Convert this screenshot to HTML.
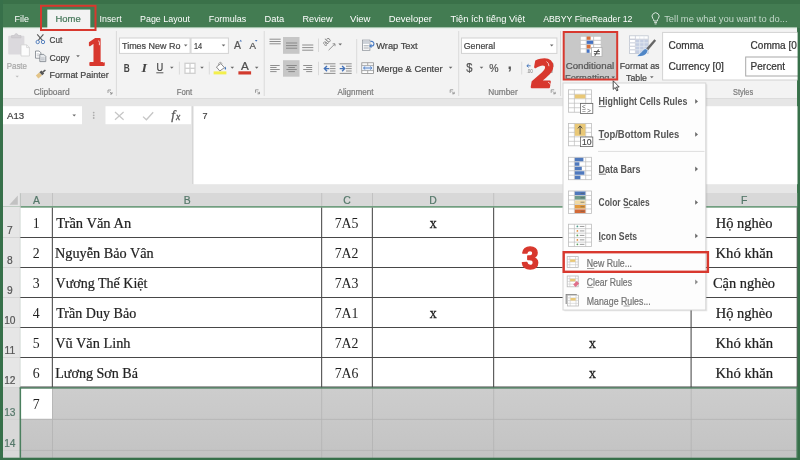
<!DOCTYPE html>
<html lang="vi"><head><meta charset="utf-8"><title>Excel - Conditional Formatting - New Rule</title>
<style>
html,body{margin:0;padding:0;background:#3d744c;}
body{width:800px;height:460px;overflow:hidden;font-family:"Liberation Sans",sans-serif;}
svg{display:block;position:absolute;left:0;top:0;filter:blur(0.4px)}
text{white-space:pre}
</style></head><body>
<svg width="800" height="460" viewBox="0 0 800 460">
<rect x="0" y="0" width="800" height="460" fill="#437c52" />
<rect x="0" y="0" width="800" height="4" fill="#3a7149" />
<rect x="3" y="27.7" width="794" height="70.8" fill="#f3f3f3" />
<rect x="3" y="27.6" width="794" height="1.5" fill="#e4efe7" />
<rect x="3" y="98.5" width="794" height="95" fill="#e6e6e6" />
<line x1="3" y1="98.5" x2="797" y2="98.5" stroke="#dcdcdc" stroke-width="1" />
<rect x="47.3" y="9.6" width="43" height="19.5" fill="#f3f3f3" />
<text x="14.5" y="22.05" font-family="Liberation Sans, sans-serif" font-size="9.9" fill="#fff" textLength="14.5" lengthAdjust="spacingAndGlyphs" >File</text>
<text x="55.5" y="22.05" font-family="Liberation Sans, sans-serif" font-size="9.9" fill="#47785a" textLength="25.2" lengthAdjust="spacingAndGlyphs" stroke="#47785a" stroke-width="0.22" >Home</text>
<text x="99.5" y="22.05" font-family="Liberation Sans, sans-serif" font-size="9.9" fill="#fff" textLength="22.2" lengthAdjust="spacingAndGlyphs" >Insert</text>
<text x="140" y="22.05" font-family="Liberation Sans, sans-serif" font-size="9.9" fill="#fff" textLength="50" lengthAdjust="spacingAndGlyphs" >Page Layout</text>
<text x="208.7" y="22.05" font-family="Liberation Sans, sans-serif" font-size="9.9" fill="#fff" textLength="37.5" lengthAdjust="spacingAndGlyphs" >Formulas</text>
<text x="264.5" y="22.05" font-family="Liberation Sans, sans-serif" font-size="9.9" fill="#fff" textLength="19.7" lengthAdjust="spacingAndGlyphs" >Data</text>
<text x="302.5" y="22.05" font-family="Liberation Sans, sans-serif" font-size="9.9" fill="#fff" textLength="30" lengthAdjust="spacingAndGlyphs" >Review</text>
<text x="350" y="22.05" font-family="Liberation Sans, sans-serif" font-size="9.9" fill="#fff" textLength="20.5" lengthAdjust="spacingAndGlyphs" >View</text>
<text x="388.7" y="22.05" font-family="Liberation Sans, sans-serif" font-size="9.9" fill="#fff" textLength="43.3" lengthAdjust="spacingAndGlyphs" >Developer</text>
<text x="450.5" y="22.05" font-family="Liberation Sans, sans-serif" font-size="9.9" fill="#fff" textLength="74.5" lengthAdjust="spacingAndGlyphs" >Tiện ích tiếng Việt</text>
<text x="543.2" y="22.05" font-family="Liberation Sans, sans-serif" font-size="9.9" fill="#fff" textLength="89.3" lengthAdjust="spacingAndGlyphs" >ABBYY FineReader 12</text>
<path d="M652.8 18.4a3.5 3.5 0 1 1 5.6 0c-.7.8-1.1 1.5-1.1 2.6h-3.4c0-1.1-.4-1.8-1.1-2.6z" fill="none" stroke="#dcE8e0" stroke-width="1" />
<line x1="654.2" y1="22.4" x2="657" y2="22.4" stroke="#dce8e0" stroke-width="1" />
<line x1="654.6" y1="23.9" x2="656.6" y2="23.9" stroke="#dce8e0" stroke-width="0.9" />
<text x="664.2" y="21.65" font-family="Liberation Sans, sans-serif" font-size="9.9" fill="#c3d8ca" textLength="123.3" lengthAdjust="spacingAndGlyphs" >Tell me what you want to do...</text>
<rect x="41" y="5.8" width="54.5" height="24.2" fill="none" stroke="#d8382e" stroke-width="2" />
<rect x="8.2" y="35.8" width="16.2" height="18.6" fill="#dbd9dd" rx="1" />
<path d="M11.6 37.8v-2.2h3c0-2.6 3.4-2.6 3.4 0h3v2.2z" fill="#d2d0d4" stroke="#c4c2c6" stroke-width="0.7" />
<path d="M21 44.8h5.6l2.8 2.8v8.4h-8.4z" fill="#fcfcfc" stroke="#cfcfcf" stroke-width="0.8" />
<path d="M26.6 44.8v2.8h2.8" fill="none" stroke="#cfcfcf" stroke-width="0.7" />
<text x="6.7" y="69.1" font-family="Liberation Sans, sans-serif" font-size="9.7" fill="#a8a8a8" textLength="20.3" lengthAdjust="spacingAndGlyphs" stroke="#a8a8a8" stroke-width="0.22" >Paste</text>
<path d="M15.5 75.8h3.4l-1.7 1.8z" fill="#bdbdbd" />
<line x1="37.2" y1="34.4" x2="42.6" y2="40.6" stroke="#5a5a5a" stroke-width="1.1" />
<line x1="43.4" y1="34.4" x2="38" y2="40.6" stroke="#5a5a5a" stroke-width="1.1" />
<circle cx="37.7" cy="42" r="1.7" fill="none" stroke="#5a84c0" stroke-width="1"/>
<circle cx="43" cy="42" r="1.7" fill="none" stroke="#5a84c0" stroke-width="1"/>
<text x="49.5" y="42.5" font-family="Liberation Sans, sans-serif" font-size="9.7" fill="#444444" textLength="12.7" lengthAdjust="spacingAndGlyphs" stroke="#444444" stroke-width="0.22" >Cut</text>
<path d="M35.5 51h3.6l1.8 1.8v5.4h-5.4z" fill="#fff" stroke="#7a8088" stroke-width="0.8" />
<line x1="36.6" y1="54" x2="39.4" y2="54" stroke="#9aa0a8" stroke-width="0.6" />
<line x1="36.6" y1="55.8" x2="39.4" y2="55.8" stroke="#9aa0a8" stroke-width="0.6" />
<path d="M39.8 54.4h4l2 2v5.2h-6z" fill="#e6e9ec" stroke="#7a8088" stroke-width="0.8" />
<line x1="41" y1="58" x2="44.6" y2="58" stroke="#9aa0a8" stroke-width="0.6" />
<line x1="41" y1="59.8" x2="44.6" y2="59.8" stroke="#9aa0a8" stroke-width="0.6" />
<text x="49.5" y="60.7" font-family="Liberation Sans, sans-serif" font-size="9.7" fill="#444444" textLength="20.2" lengthAdjust="spacingAndGlyphs" stroke="#444444" stroke-width="0.22" >Copy</text>
<path d="M76.2 55.2h3.6l-1.8 2z" fill="#6a6a6a" />
<path d="M35.8 75.4l3.4-3 2.8 3-3.6 3z" fill="#e3c488" />
<path d="M39.4 72.2l2-1.8 2.8 3-2 1.8z" fill="#555" />
<line x1="42.8" y1="72.2" x2="45.4" y2="70" stroke="#555" stroke-width="1.6" />
<text x="49.5" y="77.5" font-family="Liberation Sans, sans-serif" font-size="9.7" fill="#444444" textLength="59.2" lengthAdjust="spacingAndGlyphs" stroke="#444444" stroke-width="0.22" >Format Painter</text>
<text x="33.7" y="94.8" font-family="Liberation Sans, sans-serif" font-size="9.4" fill="#7a7a7a" textLength="36" lengthAdjust="spacingAndGlyphs" stroke="#7a7a7a" stroke-width="0.22" >Clipboard</text>
<path d="M108 93V90H111" fill="none" stroke="#888" stroke-width="0.8" />
<path d="M109.6 91.6L112 94M112 92V94H110" fill="none" stroke="#888" stroke-width="0.8" />
<line x1="116.4" y1="31" x2="116.4" y2="96" stroke="#dadada" stroke-width="1" />
<rect x="119.5" y="38" width="70.6" height="15.4" fill="#fff" stroke="#d2d2d2" stroke-width="1" />
<text x="122" y="48.7" font-family="Liberation Sans, sans-serif" font-size="9.7" fill="#444444" textLength="58.5" lengthAdjust="spacingAndGlyphs" stroke="#444444" stroke-width="0.22" >Times New Ro</text>
<path d="M183.9 44.4h3.6l-1.8 2z" fill="#6a6a6a" />
<rect x="191" y="38" width="37.4" height="15.4" fill="#fff" stroke="#d2d2d2" stroke-width="1" />
<text x="194" y="48.7" font-family="Liberation Sans, sans-serif" font-size="9.7" fill="#444444" textLength="8.2" lengthAdjust="spacingAndGlyphs" stroke="#444444" stroke-width="0.22" >14</text>
<path d="M221.7 44.4h3.6l-1.8 2z" fill="#6a6a6a" />
<text x="123.8" y="71.5" font-family="Liberation Sans, sans-serif" font-size="10.5" fill="#444444" font-weight="bold" textLength="6" lengthAdjust="spacingAndGlyphs" >B</text>
<text x="141.4" y="71.6" font-family="Liberation Serif, serif" font-size="12" fill="#444444" font-weight="bold" font-style="italic" textLength="5.5" lengthAdjust="spacingAndGlyphs" >I</text>
<text x="156.5" y="71" font-family="Liberation Sans, sans-serif" font-size="10.2" fill="#444444" textLength="6.7" lengthAdjust="spacingAndGlyphs" stroke="#444444" stroke-width="0.22" >U</text>
<line x1="156.3" y1="72.8" x2="163.4" y2="72.8" stroke="#444444" stroke-width="0.9" />
<path d="M170 66.8h3.6l-1.8 2z" fill="#6a6a6a" />
<line x1="179.4" y1="61.7" x2="179.4" y2="74.5" stroke="#dadada" stroke-width="1" />
<rect x="185" y="63.3" width="10" height="10" fill="#fff" stroke="#cfcfcf" stroke-width="1.3" />
<line x1="190" y1="63.3" x2="190" y2="73.3" stroke="#cfcfcf" stroke-width="1.3" />
<line x1="185" y1="68.3" x2="195" y2="68.3" stroke="#cfcfcf" stroke-width="1.3" />
<path d="M200.2 66.8h3.6l-1.8 2z" fill="#6a6a6a" />
<line x1="209.3" y1="61.7" x2="209.3" y2="74.5" stroke="#dadada" stroke-width="1" />
<path d="M216.4 67l4.4-3.4 3.6 4-4.6 3.4z" fill="#fff" stroke="#808080" stroke-width="0.9" />
<path d="M218.8 65c-.8-2.8 2.6-3.6 3.2-1.2" fill="none" stroke="#8a8a8a" stroke-width="0.8" />
<path d="M225.2 66.6c.9 1.4 1.3 2.2.5 2.9-.9.5-1.6-.3-.5-2.9z" fill="#3d72b8" />
<rect x="213.6" y="71.4" width="12.8" height="3" fill="#f3ef4c" />
<path d="M230.5 66.8h3.6l-1.8 2z" fill="#6a6a6a" />
<text x="240.9" y="70.4" font-family="Liberation Sans, sans-serif" font-size="10.6" fill="#505050" textLength="7.8" lengthAdjust="spacingAndGlyphs" stroke="#505050" stroke-width="0.22" >A</text>
<rect x="238.4" y="71.3" width="12.7" height="3.2" fill="#d23a2d" />
<path d="M254.9 66.8h3.6l-1.8 2z" fill="#6a6a6a" />
<text x="233.9" y="48.7" font-family="Liberation Sans, sans-serif" font-size="10.2" fill="#555" textLength="6.9" lengthAdjust="spacingAndGlyphs" stroke="#555" stroke-width="0.22" >A</text>
<path d="M239.4 41.6l1.3-1.8 1.3 1.8z" fill="#4a76b8" />
<text x="249.5" y="49" font-family="Liberation Sans, sans-serif" font-size="9.2" fill="#555" textLength="6.5" lengthAdjust="spacingAndGlyphs" stroke="#555" stroke-width="0.22" >A</text>
<path d="M254.9 40l1.3 1.8 1.3-1.8z" fill="#4a76b8" />
<text x="176.7" y="95.1" font-family="Liberation Sans, sans-serif" font-size="9.4" fill="#7a7a7a" textLength="15.5" lengthAdjust="spacingAndGlyphs" stroke="#7a7a7a" stroke-width="0.22" >Font</text>
<path d="M255.5 92.8V89.8H258.5" fill="none" stroke="#888" stroke-width="0.8" />
<path d="M257.1 91.4L259.5 93.8M259.5 91.8V93.8H257.5" fill="none" stroke="#888" stroke-width="0.8" />
<line x1="264.2" y1="31" x2="264.2" y2="96" stroke="#dadada" stroke-width="1" />
<line x1="269.5" y1="39.2" x2="280.7" y2="39.2" stroke="#828282" stroke-width="0.9" />
<line x1="269.5" y1="41.5" x2="280.7" y2="41.5" stroke="#828282" stroke-width="0.9" />
<line x1="269.5" y1="43.8" x2="280.7" y2="43.8" stroke="#828282" stroke-width="0.9" />
<rect x="283" y="37" width="16.5" height="16.8" fill="#c6c6c6" />
<line x1="286" y1="43" x2="297.2" y2="43" stroke="#828282" stroke-width="0.9" />
<line x1="286" y1="45.6" x2="297.2" y2="45.6" stroke="#828282" stroke-width="0.9" />
<line x1="286" y1="48.2" x2="297.2" y2="48.2" stroke="#828282" stroke-width="0.9" />
<line x1="302.2" y1="45" x2="313.3" y2="45" stroke="#828282" stroke-width="0.9" />
<line x1="302.2" y1="47.6" x2="313.3" y2="47.6" stroke="#828282" stroke-width="0.9" />
<line x1="302.2" y1="50.2" x2="313.3" y2="50.2" stroke="#828282" stroke-width="0.9" />
<line x1="318.5" y1="38.5" x2="318.5" y2="52" stroke="#dadada" stroke-width="1" />
<text x="0" y="0" transform="translate(325.6 46.4) rotate(-48)" font-family="Liberation Sans, sans-serif" font-size="7.8" fill="#707070">ab</text>
<path d="M328.6 50.2l6.4-6.4m-2.4 0h2.4v2.4" fill="none" stroke="#8a8a8a" stroke-width="0.9" />
<path d="M338.4 43.6h3.6l-1.8 2z" fill="#6a6a6a" />
<line x1="270.2" y1="65.5" x2="279.7" y2="65.5" stroke="#828282" stroke-width="0.9" />
<line x1="270.2" y1="67.5" x2="276.6" y2="67.5" stroke="#828282" stroke-width="0.9" />
<line x1="270.2" y1="69.5" x2="279.7" y2="69.5" stroke="#828282" stroke-width="0.9" />
<line x1="270.2" y1="71.6" x2="276.6" y2="71.6" stroke="#828282" stroke-width="0.9" />
<rect x="283" y="60.2" width="16.5" height="16.5" fill="#c6c6c6" />
<line x1="286.4" y1="65.5" x2="296.8" y2="65.5" stroke="#828282" stroke-width="0.9" />
<line x1="288.3" y1="67.5" x2="294.9" y2="67.5" stroke="#828282" stroke-width="0.9" />
<line x1="286.4" y1="69.5" x2="296.8" y2="69.5" stroke="#828282" stroke-width="0.9" />
<line x1="288.3" y1="71.6" x2="294.9" y2="71.6" stroke="#828282" stroke-width="0.9" />
<line x1="303.2" y1="65.5" x2="312.2" y2="65.5" stroke="#828282" stroke-width="0.9" />
<line x1="306.2" y1="67.5" x2="312.2" y2="67.5" stroke="#828282" stroke-width="0.9" />
<line x1="303.2" y1="69.5" x2="312.2" y2="69.5" stroke="#828282" stroke-width="0.9" />
<line x1="306.2" y1="71.6" x2="312.2" y2="71.6" stroke="#828282" stroke-width="0.9" />
<line x1="318.5" y1="61.7" x2="318.5" y2="75.2" stroke="#dadada" stroke-width="1" />
<line x1="323.8" y1="63.8" x2="335.5" y2="63.8" stroke="#828282" stroke-width="0.9" />
<line x1="330" y1="66.2" x2="335.5" y2="66.2" stroke="#828282" stroke-width="0.9" />
<line x1="330" y1="68.6" x2="335.5" y2="68.6" stroke="#828282" stroke-width="0.9" />
<line x1="330" y1="71" x2="335.5" y2="71" stroke="#828282" stroke-width="0.9" />
<line x1="323.8" y1="73.4" x2="335.5" y2="73.4" stroke="#828282" stroke-width="0.9" />
<path d="M329.4 68.6h-5m2.6-2.6l-2.6 2.6 2.6 2.6" fill="none" stroke="#4472b8" stroke-width="1.4" />
<line x1="339.7" y1="63.8" x2="351.7" y2="63.8" stroke="#828282" stroke-width="0.9" />
<line x1="346" y1="66.2" x2="351.7" y2="66.2" stroke="#828282" stroke-width="0.9" />
<line x1="346" y1="68.6" x2="351.7" y2="68.6" stroke="#828282" stroke-width="0.9" />
<line x1="346" y1="71" x2="351.7" y2="71" stroke="#828282" stroke-width="0.9" />
<line x1="339.7" y1="73.4" x2="351.7" y2="73.4" stroke="#828282" stroke-width="0.9" />
<path d="M339.7 68.6h5m-2.6-2.6l2.6 2.6-2.6 2.6" fill="none" stroke="#4472b8" stroke-width="1.4" />
<line x1="356.7" y1="39" x2="356.7" y2="73.5" stroke="#dadada" stroke-width="1" />
<rect x="362.5" y="40.1" width="7.4" height="10.2" fill="#fff" stroke="#8d939b" stroke-width="0.8" />
<rect x="362.9" y="40.5" width="6.6" height="3.4" fill="#cdd2d9" />
<line x1="363.6" y1="45.8" x2="368.8" y2="45.8" stroke="#8d939b" stroke-width="0.8" />
<line x1="363.6" y1="48" x2="368.8" y2="48" stroke="#8d939b" stroke-width="0.8" />
<path d="M370.4 41.4h1.2a2 2 0 0 1 0 4.6h-1.6m1.5-1.5l-1.6 1.5 1.6 1.5" fill="none" stroke="#4a7cc4" stroke-width="1.1" />
<text x="376.2" y="49" font-family="Liberation Sans, sans-serif" font-size="9.7" fill="#444444" textLength="41.5" lengthAdjust="spacingAndGlyphs" stroke="#444444" stroke-width="0.22" >Wrap Text</text>
<rect x="361.8" y="62.8" width="11.8" height="10.6" fill="#fff" stroke="#8c8c8c" stroke-width="0.8" />
<rect x="362.2" y="65.6" width="11" height="4.8" fill="#e6edf7" />
<line x1="361.8" y1="65.4" x2="373.6" y2="65.4" stroke="#8c8c8c" stroke-width="0.7" />
<line x1="361.8" y1="70.6" x2="373.6" y2="70.6" stroke="#8c8c8c" stroke-width="0.7" />
<line x1="367.7" y1="62.8" x2="367.7" y2="65.4" stroke="#8c8c8c" stroke-width="0.7" />
<line x1="367.7" y1="70.6" x2="367.7" y2="73.4" stroke="#8c8c8c" stroke-width="0.7" />
<path d="M363.6 68h8.2m-6.6-1.5l-1.7 1.5 1.7 1.5m5-3l1.7 1.5-1.7 1.5" fill="none" stroke="#4a7cc4" stroke-width="0.9" />
<text x="376.5" y="72.2" font-family="Liberation Sans, sans-serif" font-size="9.7" fill="#444444" textLength="66" lengthAdjust="spacingAndGlyphs" stroke="#444444" stroke-width="0.22" >Merge &amp; Center</text>
<path d="M448.8 66.8h3.6l-1.8 2z" fill="#6a6a6a" />
<text x="337.5" y="94.8" font-family="Liberation Sans, sans-serif" font-size="9.4" fill="#7a7a7a" textLength="36" lengthAdjust="spacingAndGlyphs" stroke="#7a7a7a" stroke-width="0.22" >Alignment</text>
<path d="M450.2 92.8V89.8H453.2" fill="none" stroke="#888" stroke-width="0.8" />
<path d="M451.8 91.4L454.2 93.8M454.2 91.8V93.8H452.2" fill="none" stroke="#888" stroke-width="0.8" />
<line x1="458.7" y1="31" x2="458.7" y2="96" stroke="#dadada" stroke-width="1" />
<rect x="461.5" y="38" width="95.4" height="15.4" fill="#fff" stroke="#d2d2d2" stroke-width="1" />
<text x="463.7" y="48.7" font-family="Liberation Sans, sans-serif" font-size="9.7" fill="#444444" textLength="31.5" lengthAdjust="spacingAndGlyphs" stroke="#444444" stroke-width="0.22" >General</text>
<path d="M549.9 44.4h3.6l-1.8 2z" fill="#6a6a6a" />
<text x="466.2" y="72.4" font-family="Liberation Sans, sans-serif" font-size="13" fill="#555" textLength="6.2" lengthAdjust="spacingAndGlyphs" stroke="#555" stroke-width="0.22" >$</text>
<path d="M479.7 66.8h3.6l-1.8 2z" fill="#6a6a6a" />
<text x="489.2" y="72.2" font-family="Liberation Sans, sans-serif" font-size="11.4" fill="#555" textLength="9.3" lengthAdjust="spacingAndGlyphs" stroke="#555" stroke-width="0.22" >%</text>
<text x="507.4" y="68.6" font-family="Liberation Sans, sans-serif" font-size="16" fill="#555" font-weight="bold" >,</text>
<line x1="521.7" y1="61.7" x2="521.7" y2="74.5" stroke="#dadada" stroke-width="1" />
<path d="M527 65.8h3.6m-2-1.6l-1.8 1.6 1.8 1.6" fill="none" stroke="#3d72b8" stroke-width="0.9" />
<text x="526.5" y="72.8" font-family="Liberation Sans, sans-serif" font-size="4.6" fill="#777" >.00</text>
<text x="547.5" y="66.6" font-family="Liberation Sans, sans-serif" font-size="4.6" fill="#777" >.00</text>
<text x="549" y="72.8" font-family="Liberation Sans, sans-serif" font-size="4.6" fill="#777" >.0</text>
<text x="488.3" y="94.8" font-family="Liberation Sans, sans-serif" font-size="9.4" fill="#7a7a7a" textLength="29.4" lengthAdjust="spacingAndGlyphs" stroke="#7a7a7a" stroke-width="0.22" >Number</text>
<path d="M551.2 92.8V89.8H554.2" fill="none" stroke="#888" stroke-width="0.8" />
<path d="M552.8 91.4L555.2 93.8M555.2 91.8V93.8H553.2" fill="none" stroke="#888" stroke-width="0.8" />
<line x1="560.5" y1="31" x2="560.5" y2="96" stroke="#dadada" stroke-width="1" />
<rect x="563.7" y="32" width="53.5" height="47.5" fill="#c8c8c8" stroke="#d8382e" stroke-width="2" />
<rect x="580.2" y="36.2" width="21" height="17" fill="#fff" stroke="#c2c2c2" stroke-width="0.9" />
<line x1="586.3" y1="36.2" x2="586.3" y2="53.2" stroke="#c2c2c2" stroke-width="0.9" />
<line x1="593.6" y1="36.2" x2="593.6" y2="53.2" stroke="#c2c2c2" stroke-width="0.9" />
<line x1="580.2" y1="40.3" x2="601.2" y2="40.3" stroke="#c2c2c2" stroke-width="0.9" />
<line x1="580.2" y1="44.4" x2="601.2" y2="44.4" stroke="#c2c2c2" stroke-width="0.9" />
<line x1="580.2" y1="48.8" x2="601.2" y2="48.8" stroke="#c2c2c2" stroke-width="0.9" />
<rect x="586.8" y="36.5" width="3.8" height="3.3" fill="#d8703a" />
<rect x="586.8" y="40.7" width="6.3" height="3.2" fill="#4472c4" />
<rect x="586.8" y="44.8" width="3.8" height="3.6" fill="#d8703a" />
<rect x="586.8" y="49.3" width="2.8" height="3.5" fill="#4472c4" />
<rect x="591.6" y="47.5" width="10.4" height="9" fill="#fff" stroke="#b0b0b0" stroke-width="0.8" />
<text x="593.8" y="55.6" font-family="Liberation Sans, sans-serif" font-size="10" fill="#444" textLength="6.4" lengthAdjust="spacingAndGlyphs" stroke="#444" stroke-width="0.22" >≠</text>
<clipPath id="cfclip"><rect x="564.7" y="33" width="51.5" height="45.6"/></clipPath>
<text x="565.7" y="68.8" font-family="Liberation Sans, sans-serif" font-size="9.7" fill="#555" textLength="48.5" lengthAdjust="spacingAndGlyphs" stroke="#555" stroke-width="0.22" >Conditional</text>
<g clip-path="url(#cfclip)">
<text x="565" y="81" font-family="Liberation Sans, sans-serif" font-size="9.7" fill="#555" textLength="44.5" lengthAdjust="spacingAndGlyphs" stroke="#555" stroke-width="0.22" >Formatting</text>
<path d="M611.4 76.6h3.6l-1.8 2z" fill="#555" />
</g>
<rect x="629.4" y="35.8" width="18.8" height="17.6" fill="#fff" stroke="#bfc5d0" stroke-width="0.8" />
<rect x="635.6" y="39.4" width="12.4" height="13.8" fill="#c3cde2" />
<line x1="635.4" y1="35.8" x2="635.4" y2="53.4" stroke="#c6ccd8" stroke-width="0.8" />
<line x1="639.7" y1="35.8" x2="639.7" y2="53.4" stroke="#e4e8f0" stroke-width="0.8" />
<line x1="644" y1="35.8" x2="644" y2="53.4" stroke="#e4e8f0" stroke-width="0.8" />
<line x1="629.4" y1="39.3" x2="648.2" y2="39.3" stroke="#e4e8f0" stroke-width="0.8" />
<line x1="629.4" y1="42.8" x2="648.2" y2="42.8" stroke="#e4e8f0" stroke-width="0.8" />
<line x1="629.4" y1="46.3" x2="648.2" y2="46.3" stroke="#e4e8f0" stroke-width="0.8" />
<line x1="629.4" y1="49.8" x2="648.2" y2="49.8" stroke="#e4e8f0" stroke-width="0.8" />
<line x1="629.4" y1="39.3" x2="635.4" y2="39.3" stroke="#c6ccd8" stroke-width="0.8" />
<line x1="629.4" y1="42.8" x2="635.4" y2="42.8" stroke="#c6ccd8" stroke-width="0.8" />
<line x1="629.4" y1="46.3" x2="635.4" y2="46.3" stroke="#c6ccd8" stroke-width="0.8" />
<line x1="629.4" y1="49.8" x2="635.4" y2="49.8" stroke="#c6ccd8" stroke-width="0.8" />
<line x1="629.4" y1="39.3" x2="648.2" y2="39.3" stroke="#c6ccd8" stroke-width="0.8" />
<path d="M654.4 39.2l-8.2 9.4 1.9 1.7 8-9.5z" fill="#666" />
<path d="M646 48.6c-3.4.2-4 4.2-9.6 7.6 5.4 1.2 10.4-.6 11.6-5.6z" fill="#4f86c6" stroke="#fff" stroke-width="0.7" />
<text x="619.7" y="68.8" font-family="Liberation Sans, sans-serif" font-size="9.7" fill="#444444" textLength="39.8" lengthAdjust="spacingAndGlyphs" stroke="#444444" stroke-width="0.22" >Format as</text>
<text x="626" y="80.8" font-family="Liberation Sans, sans-serif" font-size="9.7" fill="#444444" textLength="21" lengthAdjust="spacingAndGlyphs" stroke="#444444" stroke-width="0.22" >Table</text>
<path d="M650 76.2h3.6l-1.8 2z" fill="#6a6a6a" />
<rect x="662.6" y="32.4" width="140" height="47.6" fill="#fff" stroke="#d2d2d2" stroke-width="1" />
<text x="668.4" y="49" font-family="Liberation Sans, sans-serif" font-size="10.4" fill="#333" textLength="35.3" lengthAdjust="spacingAndGlyphs" stroke="#333" stroke-width="0.22" >Comma</text>
<clipPath id="rclip"><rect x="0" y="0" width="797" height="460"/></clipPath>
<g clip-path="url(#rclip)">
<text x="750.6" y="49" font-family="Liberation Sans, sans-serif" font-size="10.4" fill="#333" textLength="46.2" lengthAdjust="spacingAndGlyphs" stroke="#333" stroke-width="0.22" >Comma [0</text>
</g>
<text x="668.4" y="70" font-family="Liberation Sans, sans-serif" font-size="10.4" fill="#333" textLength="55.5" lengthAdjust="spacingAndGlyphs" stroke="#333" stroke-width="0.22" >Currency [0]</text>
<rect x="745.7" y="57" width="60" height="19" fill="#fff" stroke="#a8a8a8" stroke-width="1" />
<text x="750.6" y="70" font-family="Liberation Sans, sans-serif" font-size="10.4" fill="#333" textLength="34.5" lengthAdjust="spacingAndGlyphs" stroke="#333" stroke-width="0.22" >Percent</text>
<text x="733.1" y="95.4" font-family="Liberation Sans, sans-serif" font-size="9.4" fill="#7a7a7a" textLength="20" lengthAdjust="spacingAndGlyphs" stroke="#7a7a7a" stroke-width="0.22" >Styles</text>
<rect x="3" y="106.2" width="79" height="18" fill="#fff" />
<text x="7" y="119.2" font-family="Liberation Sans, sans-serif" font-size="9.7" fill="#444444" textLength="17.2" lengthAdjust="spacingAndGlyphs" stroke="#444444" stroke-width="0.22" >A13</text>
<path d="M72.4 114.4h3.6l-1.8 2z" fill="#6a6a6a" />
<circle cx="93.7" cy="112.6" r="0.9" fill="#adadad"/>
<circle cx="93.7" cy="115.3" r="0.9" fill="#adadad"/>
<circle cx="93.7" cy="118" r="0.9" fill="#adadad"/>
<rect x="105.5" y="106.2" width="85.6" height="18" fill="#fff" />
<path d="M115 112l8.6 7.8m0-7.8l-8.6 7.8" fill="none" stroke="#c6c6c6" stroke-width="1.2" />
<path d="M143 116.6l3.4 3.2 6.8-7.6" fill="none" stroke="#c6c6c6" stroke-width="1.3" />
<text x="171.2" y="119.4" font-family="Liberation Serif, serif" font-size="13.4" fill="#5a5a5a" font-style="italic" stroke="#5a5a5a" stroke-width="0.3">f</text>
<text x="175.9" y="120.4" font-family="Liberation Serif, serif" font-size="9.6" fill="#5a5a5a" font-style="italic" stroke="#5a5a5a" stroke-width="0.3">x</text>
<rect x="193.8" y="106.2" width="604" height="78" fill="#fff" />
<line x1="192.5" y1="106.2" x2="192.5" y2="184" stroke="#d6d6d6" stroke-width="1" />
<text x="202.6" y="119.2" font-family="Liberation Sans, sans-serif" font-size="9.7" fill="#444444" textLength="5" lengthAdjust="spacingAndGlyphs" stroke="#444444" stroke-width="0.22" >7</text>
<rect x="3" y="193" width="17.3" height="13.5" fill="#e6e6e6" />
<path d="M9.4 204.8h8.4v-9.4z" fill="#c2c2c2" />
<rect x="20.3" y="193" width="777" height="13.2" fill="#d8d8d8" />
<line x1="52.5" y1="193" x2="52.5" y2="206" stroke="#bdbdbd" stroke-width="0.8" />
<line x1="321.7" y1="193" x2="321.7" y2="206" stroke="#bdbdbd" stroke-width="0.8" />
<line x1="372.5" y1="193" x2="372.5" y2="206" stroke="#bdbdbd" stroke-width="0.8" />
<line x1="493.7" y1="193" x2="493.7" y2="206" stroke="#bdbdbd" stroke-width="0.8" />
<line x1="691.2" y1="193" x2="691.2" y2="206" stroke="#bdbdbd" stroke-width="0.8" />
<text x="36.4" y="203.5" font-family="Liberation Sans, sans-serif" font-size="10.4" fill="#55786a" text-anchor="middle" stroke="#55786a" stroke-width="0.22" >A</text>
<text x="187.1" y="203.5" font-family="Liberation Sans, sans-serif" font-size="10.4" fill="#55786a" text-anchor="middle" stroke="#55786a" stroke-width="0.22" >B</text>
<text x="347.1" y="203.5" font-family="Liberation Sans, sans-serif" font-size="10.4" fill="#55786a" text-anchor="middle" stroke="#55786a" stroke-width="0.22" >C</text>
<text x="433.1" y="203.5" font-family="Liberation Sans, sans-serif" font-size="10.4" fill="#55786a" text-anchor="middle" stroke="#55786a" stroke-width="0.22" >D</text>
<text x="592.45" y="203.5" font-family="Liberation Sans, sans-serif" font-size="10.4" fill="#55786a" text-anchor="middle" stroke="#55786a" stroke-width="0.22" >E</text>
<text x="744.2" y="203.5" font-family="Liberation Sans, sans-serif" font-size="10.4" fill="#55786a" text-anchor="middle" stroke="#55786a" stroke-width="0.22" >F</text>
<rect x="20.3" y="206.1" width="777" height="1.3" fill="#74a083" />
<rect x="3" y="206.5" width="17.3" height="181.5" fill="#e6e6e6" />
<rect x="3" y="388" width="17.3" height="70" fill="#d8d8d8" />
<line x1="3" y1="237.5" x2="20.3" y2="237.5" stroke="#cfcfcf" stroke-width="0.8" />
<line x1="3" y1="267.5" x2="20.3" y2="267.5" stroke="#cfcfcf" stroke-width="0.8" />
<line x1="3" y1="297.5" x2="20.3" y2="297.5" stroke="#cfcfcf" stroke-width="0.8" />
<line x1="3" y1="327.5" x2="20.3" y2="327.5" stroke="#cfcfcf" stroke-width="0.8" />
<line x1="3" y1="357.5" x2="20.3" y2="357.5" stroke="#cfcfcf" stroke-width="0.8" />
<line x1="3" y1="387.5" x2="20.3" y2="387.5" stroke="#cfcfcf" stroke-width="0.8" />
<line x1="3" y1="419.4" x2="20.3" y2="419.4" stroke="#cfcfcf" stroke-width="0.8" />
<line x1="3" y1="450.4" x2="20.3" y2="450.4" stroke="#cfcfcf" stroke-width="0.8" />
<line x1="20.3" y1="193" x2="20.3" y2="458" stroke="#c4c4c4" stroke-width="0.8" />
<text x="9.8" y="234" font-family="Liberation Sans, sans-serif" font-size="10.2" fill="#555" text-anchor="middle" stroke="#555" stroke-width="0.22" >7</text>
<text x="9.8" y="264" font-family="Liberation Sans, sans-serif" font-size="10.2" fill="#555" text-anchor="middle" stroke="#555" stroke-width="0.22" >8</text>
<text x="9.8" y="294" font-family="Liberation Sans, sans-serif" font-size="10.2" fill="#555" text-anchor="middle" stroke="#555" stroke-width="0.22" >9</text>
<text x="9.8" y="324" font-family="Liberation Sans, sans-serif" font-size="10.2" fill="#555" text-anchor="middle" stroke="#555" stroke-width="0.22" >10</text>
<text x="9.8" y="354" font-family="Liberation Sans, sans-serif" font-size="10.2" fill="#555" text-anchor="middle" stroke="#555" stroke-width="0.22" >11</text>
<text x="9.8" y="384" font-family="Liberation Sans, sans-serif" font-size="10.2" fill="#555" text-anchor="middle" stroke="#555" stroke-width="0.22" >12</text>
<text x="9.8" y="415.9" font-family="Liberation Sans, sans-serif" font-size="10.2" fill="#55786a" text-anchor="middle" stroke="#55786a" stroke-width="0.22" >13</text>
<text x="9.8" y="446.9" font-family="Liberation Sans, sans-serif" font-size="10.2" fill="#55786a" text-anchor="middle" stroke="#55786a" stroke-width="0.22" >14</text>
<rect x="20.3" y="207.6" width="777" height="180" fill="#fff" />
<line x1="52.4" y1="207.6" x2="52.4" y2="387.5" stroke="#5e5e5e" stroke-width="1.2" />
<line x1="321.6" y1="207.6" x2="321.6" y2="387.5" stroke="#5e5e5e" stroke-width="1.2" />
<line x1="372.4" y1="207.6" x2="372.4" y2="387.5" stroke="#5e5e5e" stroke-width="1.2" />
<line x1="493.6" y1="207.6" x2="493.6" y2="387.5" stroke="#5e5e5e" stroke-width="1.2" />
<line x1="691.1" y1="207.6" x2="691.1" y2="387.5" stroke="#5e5e5e" stroke-width="1.2" />
<line x1="20.3" y1="237.5" x2="797.2" y2="237.5" stroke="#474747" stroke-width="1" />
<line x1="20.3" y1="267.5" x2="797.2" y2="267.5" stroke="#474747" stroke-width="1" />
<line x1="20.3" y1="297.5" x2="797.2" y2="297.5" stroke="#474747" stroke-width="1" />
<line x1="20.3" y1="327.5" x2="797.2" y2="327.5" stroke="#474747" stroke-width="1" />
<line x1="20.3" y1="357.5" x2="797.2" y2="357.5" stroke="#474747" stroke-width="1" />
<line x1="20.3" y1="387" x2="797.2" y2="387" stroke="#474747" stroke-width="1" />
<line x1="797.2" y1="207.6" x2="797.2" y2="387.5" stroke="#474747" stroke-width="1" />
<defs><linearGradient id="selg" x1="0" y1="0" x2="0" y2="1"><stop offset="0" stop-color="#cdcdcd"/><stop offset="1" stop-color="#c3c3c3"/></linearGradient></defs>
<rect x="20.3" y="388" width="777" height="70" fill="url(#selg)" />
<rect x="21" y="388.6" width="31" height="30.2" fill="#fff" />
<line x1="52.5" y1="388" x2="52.5" y2="458" stroke="#b3b3b3" stroke-width="0.8" />
<line x1="321.7" y1="388" x2="321.7" y2="458" stroke="#b3b3b3" stroke-width="0.8" />
<line x1="372.5" y1="388" x2="372.5" y2="458" stroke="#b3b3b3" stroke-width="0.8" />
<line x1="493.7" y1="388" x2="493.7" y2="458" stroke="#b3b3b3" stroke-width="0.8" />
<line x1="691.2" y1="388" x2="691.2" y2="458" stroke="#b3b3b3" stroke-width="0.8" />
<line x1="20.3" y1="419.4" x2="797.2" y2="419.4" stroke="#b3b3b3" stroke-width="0.8" />
<line x1="20.3" y1="450.4" x2="797.2" y2="450.4" stroke="#b3b3b3" stroke-width="0.8" />
<rect x="19.6" y="387.4" width="778.4" height="1.2" fill="#4a7f5e" />
<rect x="19.6" y="387.4" width="1.5" height="70.4" fill="#4a7f5e" />
<rect x="796.4" y="387.4" width="1.4" height="70.4" fill="#4a7f5e" />
<text x="56.2" y="227.8" font-family="Liberation Serif, serif" font-size="13.8" fill="#222" textLength="75" lengthAdjust="spacingAndGlyphs" stroke="#222" stroke-width="0.2">Trần Văn An</text>
<text x="55" y="257.8" font-family="Liberation Serif, serif" font-size="13.8" fill="#222" textLength="98.7" lengthAdjust="spacingAndGlyphs" stroke="#222" stroke-width="0.2">Nguyễn Bảo Vân</text>
<text x="55.5" y="287.8" font-family="Liberation Serif, serif" font-size="13.8" fill="#222" textLength="92" lengthAdjust="spacingAndGlyphs" stroke="#222" stroke-width="0.2">Vương Thế Kiệt</text>
<text x="56.2" y="317.8" font-family="Liberation Serif, serif" font-size="13.8" fill="#222" textLength="80" lengthAdjust="spacingAndGlyphs" stroke="#222" stroke-width="0.2">Trần Duy Bảo</text>
<text x="55.2" y="347.8" font-family="Liberation Serif, serif" font-size="13.8" fill="#222" textLength="75.3" lengthAdjust="spacingAndGlyphs" stroke="#222" stroke-width="0.2">Vũ Văn Linh</text>
<text x="55.2" y="377.8" font-family="Liberation Serif, serif" font-size="13.8" fill="#222" textLength="82.8" lengthAdjust="spacingAndGlyphs" stroke="#222" stroke-width="0.2">Lương Sơn Bá</text>
<text x="36.2" y="227.7" font-family="Liberation Serif, serif" font-size="13.8" fill="#222" text-anchor="middle" >1</text>
<text x="36.2" y="257.7" font-family="Liberation Serif, serif" font-size="13.8" fill="#222" text-anchor="middle" >2</text>
<text x="36.2" y="287.7" font-family="Liberation Serif, serif" font-size="13.8" fill="#222" text-anchor="middle" >3</text>
<text x="36.2" y="317.7" font-family="Liberation Serif, serif" font-size="13.8" fill="#222" text-anchor="middle" >4</text>
<text x="36.2" y="347.7" font-family="Liberation Serif, serif" font-size="13.8" fill="#222" text-anchor="middle" >5</text>
<text x="36.2" y="377.7" font-family="Liberation Serif, serif" font-size="13.8" fill="#222" text-anchor="middle" >6</text>
<text x="36.2" y="409.1" font-family="Liberation Serif, serif" font-size="13.8" fill="#222" text-anchor="middle" >7</text>
<text x="346.6" y="227.7" font-family="Liberation Serif, serif" font-size="13.8" fill="#222" text-anchor="middle" >7A5</text>
<text x="346.6" y="257.7" font-family="Liberation Serif, serif" font-size="13.8" fill="#222" text-anchor="middle" >7A2</text>
<text x="346.6" y="287.7" font-family="Liberation Serif, serif" font-size="13.8" fill="#222" text-anchor="middle" >7A3</text>
<text x="346.6" y="317.7" font-family="Liberation Serif, serif" font-size="13.8" fill="#222" text-anchor="middle" >7A1</text>
<text x="346.6" y="347.7" font-family="Liberation Serif, serif" font-size="13.8" fill="#222" text-anchor="middle" >7A2</text>
<text x="346.6" y="377.7" font-family="Liberation Serif, serif" font-size="13.8" fill="#222" text-anchor="middle" >7A6</text>
<text x="433.1" y="227.7" font-family="Liberation Serif, serif" font-size="13.8" fill="#222" text-anchor="middle" stroke="#222" stroke-width="0.35">x</text>
<text x="433.1" y="317.7" font-family="Liberation Serif, serif" font-size="13.8" fill="#222" text-anchor="middle" stroke="#222" stroke-width="0.35">x</text>
<text x="592.4" y="347.7" font-family="Liberation Serif, serif" font-size="13.8" fill="#222" text-anchor="middle" stroke="#222" stroke-width="0.35">x</text>
<text x="592.4" y="377.7" font-family="Liberation Serif, serif" font-size="13.8" fill="#222" text-anchor="middle" stroke="#222" stroke-width="0.35">x</text>
<text x="715.7" y="227.8" font-family="Liberation Serif, serif" font-size="13.8" fill="#222" textLength="56.8" lengthAdjust="spacingAndGlyphs" stroke="#222" stroke-width="0.2">Hộ nghèo</text>
<text x="715.5" y="257.8" font-family="Liberation Serif, serif" font-size="13.8" fill="#222" textLength="57.5" lengthAdjust="spacingAndGlyphs" stroke="#222" stroke-width="0.2">Khó khăn</text>
<text x="713" y="287.8" font-family="Liberation Serif, serif" font-size="13.8" fill="#222" textLength="62" lengthAdjust="spacingAndGlyphs" stroke="#222" stroke-width="0.2">Cận nghèo</text>
<text x="715.7" y="317.8" font-family="Liberation Serif, serif" font-size="13.8" fill="#222" textLength="56.8" lengthAdjust="spacingAndGlyphs" stroke="#222" stroke-width="0.2">Hộ nghèo</text>
<text x="715.5" y="347.8" font-family="Liberation Serif, serif" font-size="13.8" fill="#222" textLength="57.5" lengthAdjust="spacingAndGlyphs" stroke="#222" stroke-width="0.2">Khó khăn</text>
<text x="715.5" y="377.8" font-family="Liberation Serif, serif" font-size="13.8" fill="#222" textLength="57.5" lengthAdjust="spacingAndGlyphs" stroke="#222" stroke-width="0.2">Khó khăn</text>
<rect x="0" y="0" width="3" height="460" fill="#37704a" />
<rect x="797.6" y="28" width="2.4" height="432" fill="#37704a" />
<rect x="0" y="457.7" width="800" height="2.3" fill="#37704a" />
<rect x="564.3" y="84.3" width="143" height="227" fill="#000" opacity="0.09"/>
<rect x="563" y="83" width="142.8" height="227" fill="#fdfdfd" stroke="#d6d6d6" stroke-width="1" />
<rect x="568.4" y="89.8" width="23" height="22.4" fill="#fff" stroke="#bdbdbd" stroke-width="0.8" />
<line x1="574.4" y1="89.8" x2="574.4" y2="112.2" stroke="#bdbdbd" stroke-width="0.7" />
<line x1="585.7" y1="89.8" x2="585.7" y2="112.2" stroke="#bdbdbd" stroke-width="0.7" />
<line x1="568.4" y1="94.28" x2="591.4" y2="94.28" stroke="#bdbdbd" stroke-width="0.7" />
<line x1="568.4" y1="98.76" x2="591.4" y2="98.76" stroke="#bdbdbd" stroke-width="0.7" />
<line x1="568.4" y1="103.24" x2="591.4" y2="103.24" stroke="#bdbdbd" stroke-width="0.7" />
<line x1="568.4" y1="107.72" x2="591.4" y2="107.72" stroke="#bdbdbd" stroke-width="0.7" />
<rect x="574.8" y="94.5" width="10.6" height="3.9" fill="#e9c877" />
<rect x="580.6" y="103.5" width="12.2" height="10" fill="#fff" stroke="#666" stroke-width="0.8" />
<text x="582" y="109" font-family="Liberation Sans, sans-serif" font-size="6.6" fill="#555" >&lt;</text>
<text x="582" y="113" font-family="Liberation Sans, sans-serif" font-size="6.6" fill="#555" >=</text>
<text x="587" y="112.6" font-family="Liberation Sans, sans-serif" font-size="6.6" fill="#555" >&gt;</text>
<text x="598.6" y="105" font-family="Liberation Sans, sans-serif" font-size="10.4" fill="#555555" font-weight="bold" textLength="88.8" lengthAdjust="spacingAndGlyphs" >Highlight Cells Rules</text>
<line x1="598.8" y1="106.6" x2="606" y2="106.6" stroke="#555555" stroke-width="0.8" />
<path d="M695.2 99v4.8l2.8 -2.4z" fill="#6a6a6a" />
<rect x="568.4" y="123.4" width="23" height="22.4" fill="#fff" stroke="#bdbdbd" stroke-width="0.8" />
<line x1="574.4" y1="123.4" x2="574.4" y2="145.8" stroke="#bdbdbd" stroke-width="0.7" />
<line x1="585.7" y1="123.4" x2="585.7" y2="145.8" stroke="#bdbdbd" stroke-width="0.7" />
<line x1="568.4" y1="127.88" x2="591.4" y2="127.88" stroke="#bdbdbd" stroke-width="0.7" />
<line x1="568.4" y1="132.36" x2="591.4" y2="132.36" stroke="#bdbdbd" stroke-width="0.7" />
<line x1="568.4" y1="136.84" x2="591.4" y2="136.84" stroke="#bdbdbd" stroke-width="0.7" />
<line x1="568.4" y1="141.32" x2="591.4" y2="141.32" stroke="#bdbdbd" stroke-width="0.7" />
<rect x="574.8" y="123.8" width="10.6" height="12" fill="#e9c877" />
<path d="M580.1 134.4v-8.4m-2.2 2.4l2.2-2.6 2.2 2.6" fill="none" stroke="#444" stroke-width="0.9" />
<rect x="580.6" y="137" width="12.2" height="9.6" fill="#fff" stroke="#666" stroke-width="0.8" />
<text x="582" y="145.4" font-family="Liberation Sans, sans-serif" font-size="9.2" fill="#4a4a4a" textLength="9.6" lengthAdjust="spacingAndGlyphs" stroke="#4a4a4a" stroke-width="0.22" >10</text>
<text x="598.6" y="138" font-family="Liberation Sans, sans-serif" font-size="10.4" fill="#555555" font-weight="bold" textLength="80.8" lengthAdjust="spacingAndGlyphs" >Top/Bottom Rules</text>
<line x1="598.8" y1="139.6" x2="604.8" y2="139.6" stroke="#555555" stroke-width="0.8" />
<path d="M695.2 132v4.8l2.8 -2.4z" fill="#6a6a6a" />
<line x1="598" y1="151.4" x2="704.5" y2="151.4" stroke="#dedede" stroke-width="1" />
<rect x="568.4" y="157.3" width="23" height="22.4" fill="#fff" stroke="#bdbdbd" stroke-width="0.8" />
<line x1="574.4" y1="157.3" x2="574.4" y2="179.7" stroke="#bdbdbd" stroke-width="0.7" />
<line x1="585.7" y1="157.3" x2="585.7" y2="179.7" stroke="#bdbdbd" stroke-width="0.7" />
<line x1="568.4" y1="161.78" x2="591.4" y2="161.78" stroke="#bdbdbd" stroke-width="0.7" />
<line x1="568.4" y1="166.26" x2="591.4" y2="166.26" stroke="#bdbdbd" stroke-width="0.7" />
<line x1="568.4" y1="170.74" x2="591.4" y2="170.74" stroke="#bdbdbd" stroke-width="0.7" />
<line x1="568.4" y1="175.22" x2="591.4" y2="175.22" stroke="#bdbdbd" stroke-width="0.7" />
<rect x="574.8" y="157.8" width="8.6" height="3.5" fill="#4f79bd" />
<rect x="574.8" y="162.28" width="4.6" height="3.5" fill="#4f79bd" />
<rect x="574.8" y="166.76" width="7" height="3.5" fill="#4f79bd" />
<rect x="574.8" y="171.24" width="9.6" height="3.5" fill="#4f79bd" />
<rect x="574.8" y="175.72" width="5.6" height="3.5" fill="#4f79bd" />
<text x="598.6" y="172.6" font-family="Liberation Sans, sans-serif" font-size="10.4" fill="#555555" font-weight="bold" textLength="42" lengthAdjust="spacingAndGlyphs" >Data Bars</text>
<line x1="598.8" y1="174.2" x2="606" y2="174.2" stroke="#555555" stroke-width="0.8" />
<path d="M695.2 166.6v4.8l2.8 -2.4z" fill="#6a6a6a" />
<rect x="568.4" y="191" width="23" height="22.4" fill="#fff" stroke="#bdbdbd" stroke-width="0.8" />
<line x1="574.4" y1="191" x2="574.4" y2="213.4" stroke="#bdbdbd" stroke-width="0.7" />
<line x1="585.7" y1="191" x2="585.7" y2="213.4" stroke="#bdbdbd" stroke-width="0.7" />
<line x1="568.4" y1="195.48" x2="591.4" y2="195.48" stroke="#bdbdbd" stroke-width="0.7" />
<line x1="568.4" y1="199.96" x2="591.4" y2="199.96" stroke="#bdbdbd" stroke-width="0.7" />
<line x1="568.4" y1="204.44" x2="591.4" y2="204.44" stroke="#bdbdbd" stroke-width="0.7" />
<line x1="568.4" y1="208.92" x2="591.4" y2="208.92" stroke="#bdbdbd" stroke-width="0.7" />
<rect x="574.8" y="191.5" width="10.6" height="3.6" fill="#4f79bd" />
<line x1="580.5" y1="193.3" x2="584.4" y2="193.3" stroke="#555" stroke-width="0.6" />
<rect x="574.8" y="195.98" width="10.6" height="3.6" fill="#6f9c8c" />
<line x1="580.5" y1="197.78" x2="584.4" y2="197.78" stroke="#555" stroke-width="0.6" />
<rect x="574.8" y="200.46" width="10.6" height="3.6" fill="#efd9a3" />
<line x1="580.5" y1="202.26" x2="584.4" y2="202.26" stroke="#555" stroke-width="0.6" />
<rect x="574.8" y="204.94" width="10.6" height="3.6" fill="#e39a3d" />
<line x1="580.5" y1="206.74" x2="584.4" y2="206.74" stroke="#555" stroke-width="0.6" />
<rect x="574.8" y="209.42" width="10.6" height="3.6" fill="#d46a37" />
<line x1="580.5" y1="211.22" x2="584.4" y2="211.22" stroke="#555" stroke-width="0.6" />
<text x="598.6" y="206" font-family="Liberation Sans, sans-serif" font-size="10.4" fill="#555555" font-weight="bold" textLength="51" lengthAdjust="spacingAndGlyphs" >Color Scales</text>
<line x1="623.8" y1="207.6" x2="629.8" y2="207.6" stroke="#555555" stroke-width="0.8" />
<path d="M695.2 200v4.8l2.8 -2.4z" fill="#6a6a6a" />
<rect x="568.4" y="224.2" width="23" height="22.4" fill="#fff" stroke="#bdbdbd" stroke-width="0.8" />
<line x1="574.4" y1="224.2" x2="574.4" y2="246.6" stroke="#bdbdbd" stroke-width="0.7" />
<line x1="585.7" y1="224.2" x2="585.7" y2="246.6" stroke="#bdbdbd" stroke-width="0.7" />
<line x1="568.4" y1="228.68" x2="591.4" y2="228.68" stroke="#bdbdbd" stroke-width="0.7" />
<line x1="568.4" y1="233.16" x2="591.4" y2="233.16" stroke="#bdbdbd" stroke-width="0.7" />
<line x1="568.4" y1="237.64" x2="591.4" y2="237.64" stroke="#bdbdbd" stroke-width="0.7" />
<line x1="568.4" y1="242.12" x2="591.4" y2="242.12" stroke="#bdbdbd" stroke-width="0.7" />
<circle cx="577.4" cy="226.45" r="0.9" fill="#4a9a8a"/>
<line x1="579.8" y1="226.45" x2="584.4" y2="226.45" stroke="#555" stroke-width="0.6" />
<circle cx="577.4" cy="230.93" r="0.9" fill="#e08a3a"/>
<line x1="579.8" y1="230.93" x2="584.4" y2="230.93" stroke="#555" stroke-width="0.6" />
<circle cx="577.4" cy="235.41" r="0.9" fill="#5aa05a"/>
<line x1="579.8" y1="235.41" x2="584.4" y2="235.41" stroke="#555" stroke-width="0.6" />
<circle cx="577.4" cy="239.89" r="0.9" fill="#e08a3a"/>
<line x1="579.8" y1="239.89" x2="584.4" y2="239.89" stroke="#555" stroke-width="0.6" />
<circle cx="577.4" cy="244.37" r="0.9" fill="#5aa05a"/>
<line x1="579.8" y1="244.37" x2="584.4" y2="244.37" stroke="#555" stroke-width="0.6" />
<text x="598.6" y="239.5" font-family="Liberation Sans, sans-serif" font-size="10.4" fill="#555555" font-weight="bold" textLength="38.6" lengthAdjust="spacingAndGlyphs" >Icon Sets</text>
<line x1="598.8" y1="241.1" x2="601.8" y2="241.1" stroke="#555555" stroke-width="0.8" />
<path d="M695.2 233.5v4.8l2.8 -2.4z" fill="#6a6a6a" />
<rect x="567.2" y="256.6" width="11" height="10.8" fill="#fff" stroke="#b8b8b8" stroke-width="0.8" />
<line x1="569.8" y1="256.6" x2="569.8" y2="267.4" stroke="#c8c8c8" stroke-width="0.6" />
<line x1="575.6" y1="256.6" x2="575.6" y2="267.4" stroke="#c8c8c8" stroke-width="0.6" />
<line x1="567.2" y1="259.3" x2="578.2" y2="259.3" stroke="#c8c8c8" stroke-width="0.6" />
<line x1="567.2" y1="262" x2="578.2" y2="262" stroke="#c8c8c8" stroke-width="0.6" />
<line x1="567.2" y1="264.7" x2="578.2" y2="264.7" stroke="#c8c8c8" stroke-width="0.6" />
<rect x="570.1" y="259.4" width="5.2" height="2.5" fill="#e9c877" />
<text x="586.8" y="266.9" font-family="Liberation Sans, sans-serif" font-size="10.2" fill="#747474" textLength="45.2" lengthAdjust="spacingAndGlyphs" stroke="#747474" stroke-width="0.22" >New Rule...</text>
<line x1="587" y1="268.5" x2="594.2" y2="268.5" stroke="#747474" stroke-width="0.7" />
<rect x="567.2" y="276" width="11" height="10.8" fill="#fff" stroke="#b8b8b8" stroke-width="0.8" />
<line x1="569.8" y1="276" x2="569.8" y2="286.8" stroke="#c8c8c8" stroke-width="0.6" />
<line x1="575.6" y1="276" x2="575.6" y2="286.8" stroke="#c8c8c8" stroke-width="0.6" />
<line x1="567.2" y1="278.7" x2="578.2" y2="278.7" stroke="#c8c8c8" stroke-width="0.6" />
<line x1="567.2" y1="281.4" x2="578.2" y2="281.4" stroke="#c8c8c8" stroke-width="0.6" />
<line x1="567.2" y1="284.1" x2="578.2" y2="284.1" stroke="#c8c8c8" stroke-width="0.6" />
<rect x="570.1" y="278.8" width="5.2" height="2.5" fill="#e9c877" />
<path d="M573.2 284.6l3.6-3.6 2.4 2.4-3.6 3.6z" fill="#e0708a" />
<text x="586.8" y="285.8" font-family="Liberation Sans, sans-serif" font-size="10.2" fill="#747474" textLength="45.2" lengthAdjust="spacingAndGlyphs" stroke="#747474" stroke-width="0.22" >Clear Rules</text>
<line x1="587" y1="287.4" x2="593.6" y2="287.4" stroke="#747474" stroke-width="0.7" />
<path d="M695.2 279.6v4.8l2.8 -2.4z" fill="#8a8a8a" />
<path d="M566.2 304v-9.4h10.6" fill="none" stroke="#8c8c8c" stroke-width="1.1" />
<rect x="567.6" y="295.2" width="11" height="10.8" fill="#fff" stroke="#b8b8b8" stroke-width="0.8" />
<line x1="570.2" y1="295.2" x2="570.2" y2="306" stroke="#c8c8c8" stroke-width="0.6" />
<line x1="576" y1="295.2" x2="576" y2="306" stroke="#c8c8c8" stroke-width="0.6" />
<line x1="567.6" y1="297.9" x2="578.6" y2="297.9" stroke="#c8c8c8" stroke-width="0.6" />
<line x1="567.6" y1="300.6" x2="578.6" y2="300.6" stroke="#c8c8c8" stroke-width="0.6" />
<line x1="567.6" y1="303.3" x2="578.6" y2="303.3" stroke="#c8c8c8" stroke-width="0.6" />
<rect x="570.5" y="298" width="5.2" height="2.5" fill="#e9c877" />
<text x="586.8" y="304.8" font-family="Liberation Sans, sans-serif" font-size="10.2" fill="#747474" textLength="63.9" lengthAdjust="spacingAndGlyphs" stroke="#747474" stroke-width="0.22" >Manage Rules...</text>
<line x1="623.6" y1="306" x2="629.6" y2="306" stroke="#747474" stroke-width="0.7" />
<rect x="563.7" y="252.2" width="144.2" height="19.6" fill="none" stroke="#d8382e" stroke-width="2.4" />
<text x="85.9" y="64.5" font-family="DejaVu Serif, serif" font-size="35" font-weight="bold" fill="#d8382e" stroke="#d8382e" stroke-width="1.8" stroke-linejoin="round" textLength="21" lengthAdjust="spacingAndGlyphs">1</text>
<text x="531.6" y="86.6" font-family="DejaVu Sans, sans-serif" font-size="37.6" font-weight="bold" fill="#d8382e" stroke="#d8382e" stroke-width="2.4" stroke-linejoin="round" font-style="italic" textLength="22.6" lengthAdjust="spacingAndGlyphs">2</text>
<text x="521.8" y="269" font-family="Liberation Sans, sans-serif" font-size="31.4" font-weight="bold" fill="#d8382e" stroke="#d8382e" stroke-width="1.5" stroke-linejoin="round" textLength="17" lengthAdjust="spacingAndGlyphs">3</text>
<path d="M98.6 40.6q1.2 1.6 .8 4.6" fill="none" stroke="#fff" stroke-width="1" opacity=".75"/>
<circle cx="103.6" cy="62" r="0.8" fill="#fff" opacity=".7"/>
<path d="M546.5 61.6q2.6 1.4 2.4 4.6" fill="none" stroke="#fff" stroke-width="0.9" opacity=".8"/>
<path d="M548 82.2q2 .4 2.4 2.4" fill="none" stroke="#fff" stroke-width="0.9" opacity=".75"/>
<path d="M613.2 80.8v8.6l2-1.9 1.5 3.3 1.3-.6-1.5-3.2h2.7z" fill="#fff" stroke="#222" stroke-width="0.8" />
</svg>
</body></html>
